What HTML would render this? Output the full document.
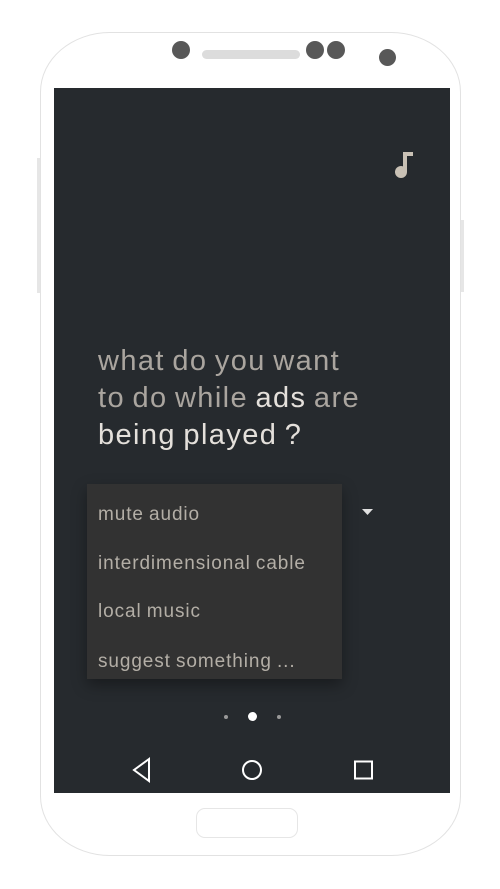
<!DOCTYPE html>
<html><head><style>
body{margin:0;width:500px;height:889px;background:#fff;position:relative;overflow:hidden;font-family:"Liberation Sans",sans-serif}
.frame{position:absolute;left:40px;top:32px;width:419px;height:822px;border:1.5px solid #e2e2e2;border-radius:70px/60px;background:#fff}
.screen{position:absolute;left:54px;top:88px;width:396px;height:705px;background:#262a2e}
.dot{position:absolute;border-radius:50%;background:#585858}
.q{position:absolute;left:98px;top:343px;font-size:29px;line-height:37px;color:#aaa59f;font-weight:300;letter-spacing:1.4px;word-spacing:-2px}
.q b{font-weight:normal;color:#e4e0db}
.menu{position:absolute;left:87px;top:484px;width:255px;height:195px;background:#323232;box-shadow:0 6px 14px rgba(0,0,0,.35)}
.menu div{position:absolute;left:11px;font-size:19px;color:#b3aea6;line-height:24px;letter-spacing:0.9px;word-spacing:-1px}
</style></head><body>
<div style="position:absolute;left:37px;top:158px;width:4px;height:135px;background:#e6e6e6"></div>
<div style="position:absolute;left:460px;top:220px;width:4px;height:72px;background:#e6e6e6"></div>
<div class="frame"></div>
<div class="dot" style="left:172px;top:41px;width:18px;height:18px"></div>
<div style="position:absolute;left:202px;top:50px;width:98px;height:9px;border-radius:5px;background:#dcdcdc"></div>
<div class="dot" style="left:306px;top:41px;width:18px;height:18px"></div>
<div class="dot" style="left:327px;top:41px;width:18px;height:18px"></div>
<div class="dot" style="left:379px;top:49px;width:17px;height:17px"></div>
<div class="screen"></div>
<svg style="position:absolute;left:390px;top:150px" width="26" height="30"><path d="M13 2h10v4h-6v16h-4z" fill="#c9c1b5"/><circle cx="11" cy="22" r="6" fill="#c9c1b5"/></svg>
<div class="q">what do you want<br>to do while <b>ads</b> are<br><b>being played ?</b></div>
<svg style="position:absolute;left:362px;top:509px" width="12" height="7"><path d="M0 0h11l-5.5 6z" fill="#e0e0e0"/></svg>
<div class="menu">
<div style="top:19px">mute audio</div>
<div style="top:68px">interdimensional cable</div>
<div style="top:116px">local music</div>
<div style="top:166px">suggest something ...</div>
</div>
<div style="position:absolute;left:224px;top:715px;width:4px;height:4px;border-radius:50%;background:#999"></div>
<div style="position:absolute;left:248px;top:712px;width:9px;height:9px;border-radius:50%;background:#fff"></div>
<div style="position:absolute;left:277px;top:715px;width:4px;height:4px;border-radius:50%;background:#999"></div>
<svg style="position:absolute;left:130px;top:757px" width="260" height="26" fill="none" stroke="#fff" stroke-width="2">
<path d="M19 2L4 13l15 11z"/><circle cx="122" cy="13" r="9"/><rect x="225" y="4.5" width="17" height="17"/></svg>
<div style="position:absolute;left:196px;top:808px;width:100px;height:28px;border:1.5px solid #e6e6e6;border-radius:9px"></div>
</body></html>
